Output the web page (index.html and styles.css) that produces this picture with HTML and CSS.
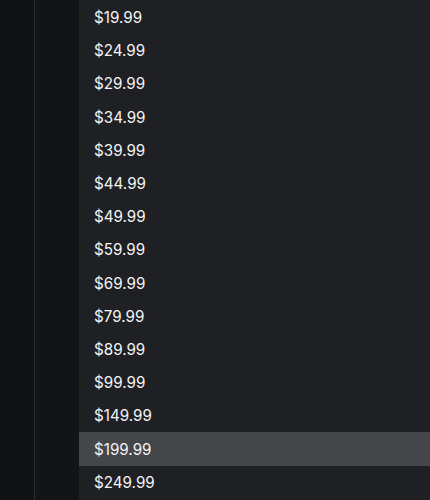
FILE: index.html
```html
<!DOCTYPE html>
<html lang="en">
<head>
  <meta charset="UTF-8" />
  <title>Price list</title>
  <link rel="stylesheet" href="styles.css">
</head>
<body>
  <div class="page">
    <div class="rail"></div>
    <div class="gutter"></div>
    <ul class="menu">
      <li class="item">$19.99</li>
      <li class="item">$24.99</li>
      <li class="item">$29.99</li>
      <li class="item">$34.99</li>
      <li class="item">$39.99</li>
      <li class="item">$44.99</li>
      <li class="item">$49.99</li>
      <li class="item">$59.99</li>
      <li class="item">$69.99</li>
      <li class="item">$79.99</li>
      <li class="item">$89.99</li>
      <li class="item">$99.99</li>
      <li class="item">$149.99</li>
      <li class="item active">$199.99</li>
      <li class="item">$249.99</li>
    </ul>
  </div>
</body>
</html>
```

FILE: styles.css
```css
body {
  margin: 0; background: #111215; height: 500px; overflow: hidden;
  font-family: 'Inter', sans-serif;
}
.page { display: flex; height: 500px; }
.rail { width: 34px; background: #111215; border-right: 1px solid #2b2d31; }
.gutter { width: 44px; background: #131417; }
.menu {
  flex: 1; margin: 0; padding: 1px 0 0; list-style: none;
  background: #1f2024;
}
.item {
  height: 33.2px; box-sizing: border-box; padding-left: 15px;
  display: flex; align-items: center;
  color: #f4f4f4; font-size: 15.2px;
}
.item.active { background: #45464a; }
```
